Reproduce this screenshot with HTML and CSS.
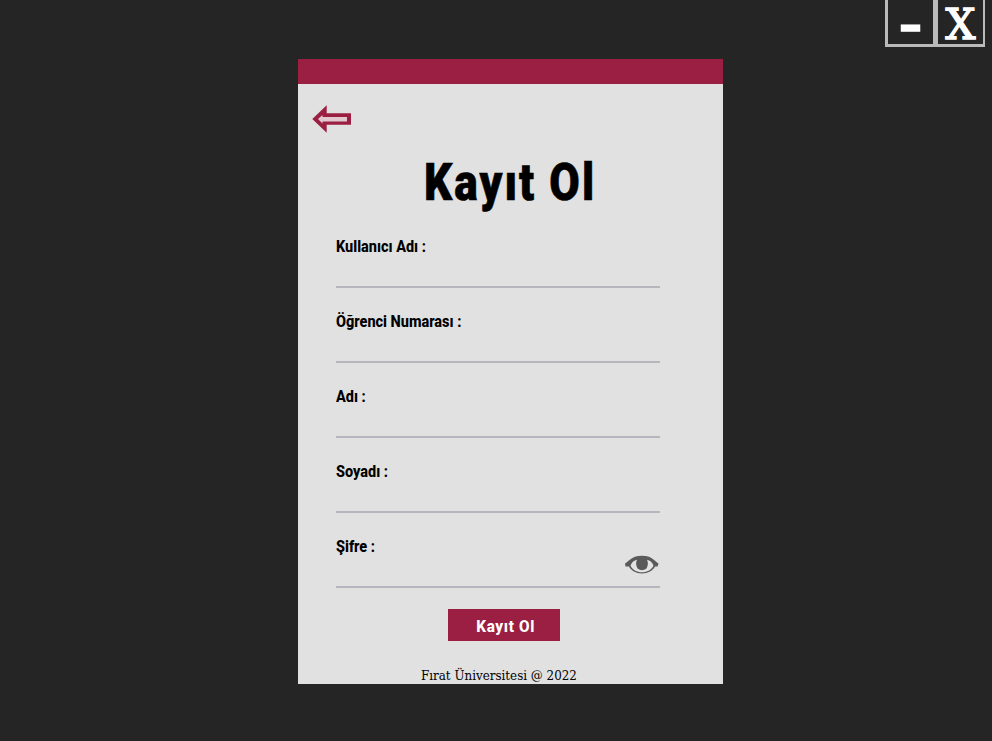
FILE: index.html
```html
<!DOCTYPE html>
<html lang="tr">
<head>
<meta charset="utf-8">
<title>Kayıt Ol</title>
<link rel="stylesheet" href="styles.css">
</head>
<body>
<div class="window-controls">
  <button class="control minimize" type="button"><span>-</span></button>
  <button class="control close" type="button"><span>X</span></button>
</div>
<main class="card">
  <div class="bar"></div>
  <svg class="back" width="40" height="28" viewBox="0 0 40 28">
    <path d="M.3 14 14.700 .3V8.300H39V19.700H14.700V27.700Z" fill="#9b1f43"/>
    <path d="M6 14 10.500 10V12H35V16.500H10.500V18.500Z" fill="#e1c8cf"/>
  </svg>
  <h1 class="title"><span>Kayıt Ol</span></h1>
  <form class="form">
    <label class="field"><span>Kullanıcı Adı :</span></label>
    <label class="field"><span>Öğrenci Numarası :</span></label>
    <label class="field"><span>Adı :</span></label>
    <label class="field"><span>Soyadı :</span></label>
    <label class="field"><span>Şifre :</span>
      <svg class="eye" width="34" height="20" viewBox="0 0 34 20">
        <path d="M0 8.500C4 6 7 .8 17 .8S29.500 6 33.500 8.500L32.500 11.500H30C28 15.500 23 18.500 17 18.500S6 15.500 4 11.500H.5Z" fill="#5a5a5a"/>
        <path d="M5.500 10.500C7 7 9 5.500 12 4.800Q10 9 12.500 13.500Q17 17 21.500 13.500Q24 9 22 4.800C25 5.500 27 7 28.500 10.500C27 14.500 22 17.300 17 17.300S7 14.500 5.500 10.500Z" fill="#e4e4e4"/>
      </svg>
    </label>
    <button class="submit" type="button"><span>Kayıt Ol</span></button>
  </form>
  <footer class="footer"><span>Fırat Üniversitesi @ 2022</span></footer>
</main>
</body>
</html>
```
FILE: styles.css
```css
* { box-sizing: border-box; }
body {
  margin: 0;
  height: 741px;
  overflow: hidden;
  background: #252525;
  color: #000;
  font-family: Roboto, sans-serif;
}
button { padding: 0; border: 0; color: #fff; }
span { display: inline-block; white-space: nowrap; }
.window-controls { display: flex; justify-content: flex-end; height: 47px; padding-right: 7px; }
.control {
  width: 51px;
  height: 47px;
  background: transparent;
  border: 3px solid #bababa;
  border-top: 0;
  font: 42px/44px "DejaVu Serif", serif;
  -webkit-text-stroke: 1.5px #fff;
}
.close { width: 49px; border-left-width: 2px; border-right-width: 2px; }
.control span { display: block; line-height: 44px; transform: translateY(3px); }
.minimize span { transform: translateY(4px) scaleX(1.35); }
.minimize { font-weight: bold; }
.card {
  display: flex;
  flex-direction: column;
  width: 425px;
  height: 625px;
  margin: 12px 0 0 298px;
  background: #e1e1e1;
}
.bar { height: 25px; flex: none; background: #9b1f43; }
.back { margin: 21px 0 0 14px; flex: none; }
.title { flex: none; margin: 20px 0 0 126px; height: 60px; font-size: 52px; font-weight: 900; line-height: 60px; letter-spacing: 2.400px; }
.title span { transform: scaleX(.85); transform-origin: left; -webkit-text-stroke: .6px #000; }
.form { display: flex; flex: none; flex-direction: column; width: 324px; margin: 0 0 0 38px; }
.field {
  display: flex;
  justify-content: space-between;
  height: 75px;
  padding-top: 24px;
  border-bottom: 2px solid #b6b7be;
  font-size: 16px;
  font-weight: 800;
  line-height: 20px;
}
.field span { height: 20px; transform: scaleX(.905); transform-origin: left; }
.eye { margin: 18px 1px 0 0; }
.submit { width: 112px; height: 32px; margin: 21px 0 0 112px; background: #9b1f43; font: 800 17px/32px Roboto, sans-serif; letter-spacing: .7px; }
.submit span { transform: translate(2px, 1px) scaleX(.9); }
.footer { flex: none; margin: 23px 0 0 123px; height: 20px; font: 13.500px/20px "DejaVu Serif", serif; }
.footer span { transform: translateY(1px) scaleX(.882); transform-origin: left; }
```
